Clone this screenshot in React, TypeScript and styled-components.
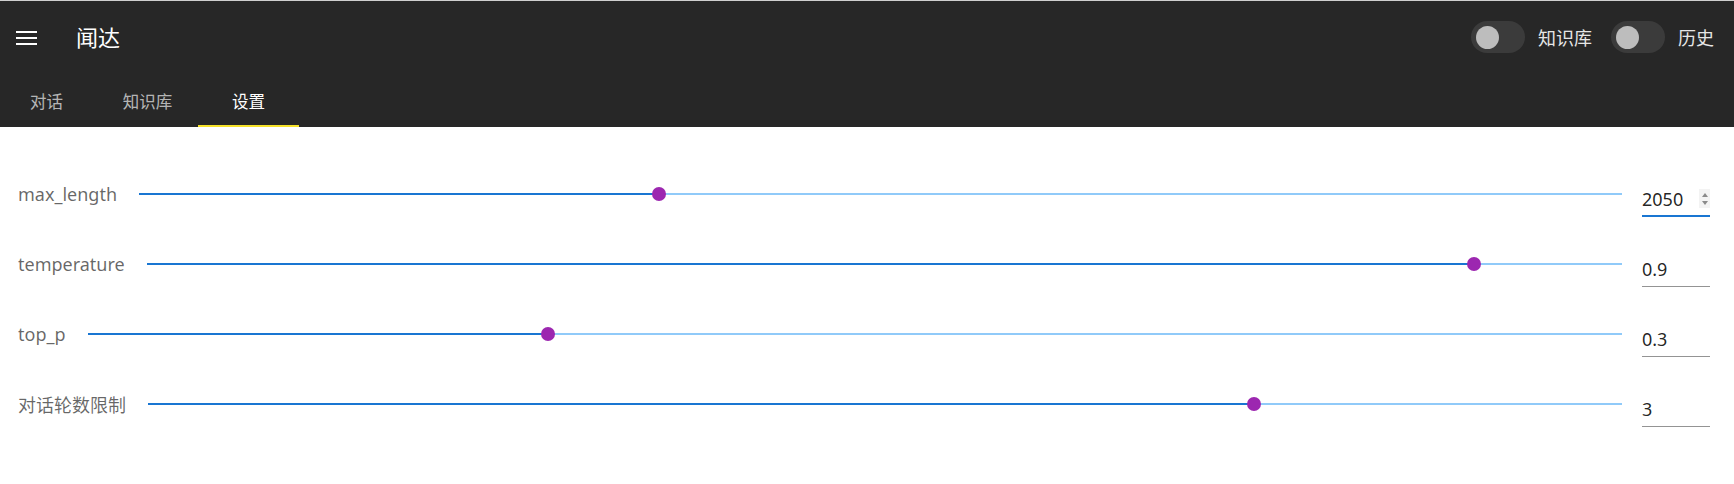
import React from "react";
import styled, { createGlobalStyle } from "styled-components";

const GlobalStyle = createGlobalStyle`
  html, body {
    margin: 0;
    padding: 0;
    background: #ffffff;
    font-family: "Noto Sans", "Noto Sans CJK SC", sans-serif;
  }
  * { box-sizing: border-box; }
`;

const Header = styled.header`
  background: #272727;
  border-top: 1px solid #cfcfcf;
  color: #ffffff;
`;

const Toolbar = styled.div`
  height: 73px;
  display: flex;
  align-items: center;
  padding: 0 20px 1px 16px;
`;

const MenuButton = styled.div`
  width: 21px;
  height: 14px;
  display: flex;
  margin-right: 39px;
  margin-top: 1px;
`;

const Title = styled.div`
  font-size: 22px;
  color: #ffffff;
  flex: 1;
  margin-bottom: 2px;
`;

const ToggleGroup = styled.label<{ $first?: boolean }>`
  display: flex;
  align-items: center;
  margin-left: ${(p) => (p.$first ? "0" : "19px")};
`;

const Track = styled.div`
  width: 54px;
  height: 32px;
  border-radius: 16px;
  background: #3b3b3b;
  display: flex;
  align-items: center;
  padding-left: 5px;
  margin-right: 13px;
`;

const Thumb = styled.div`
  width: 23px;
  height: 23px;
  border-radius: 50%;
  background: #bdbdbd;
`;

const ToggleText = styled.span`
  font-size: 18px;
  color: #e6e6e6;
`;

const TabList = styled.nav`
  display: flex;
  height: 53px;
  margin-left: -4px;
`;

const Tab = styled.div<{ $active?: boolean }>`
  width: 101px;
  display: flex;
  align-items: center;
  justify-content: center;
  padding-top: 2px;
  font-size: 16.5px;
  color: ${(p) => (p.$active ? "#ffffff" : "rgba(255,255,255,0.68)")};
  border-bottom: 2px solid ${(p) => (p.$active ? "#f6e22a" : "transparent")};
`;

const Settings = styled.main`
  padding: 32px 24px 0 18px;
`;

const Row = styled.div`
  height: 70px;
  display: flex;
  align-items: center;
`;

const Label = styled.span`
  font-size: 18px;
  color: rgba(0, 0, 0, 0.6);
  white-space: nowrap;
  margin-right: 22px;
`;

const Slider = styled.div`
  flex: 1;
  height: 14px;
  position: relative;
  display: flex;
  align-items: center;
  margin-right: 20px;
`;

const Rail = styled.div`
  width: 100%;
  height: 2px;
`;

const Knob = styled.span`
  position: absolute;
  top: 50%;
  width: 14px;
  height: 14px;
  border-radius: 50%;
  background: #9c27b0;
  transform: translate(-50%, -50%);
`;

const ValueBox = styled.div<{ $focused?: boolean }>`
  width: 68px;
  height: 36px;
  margin-top: 10px;
  display: flex;
  align-items: center;
  justify-content: space-between;
  font-size: 18px;
  color: rgba(0, 0, 0, 0.87);
  border-bottom: ${(p) => (p.$focused ? "2px solid #1976d2" : "1px solid #949494")};
  padding-top: ${(p) => (p.$focused ? "1px" : "0")};
`;

const Spinner = styled.div`
  width: 11px;
  height: 19px;
  background: #f3f3f3;
  display: flex;
  flex-direction: column;
  align-items: center;
  justify-content: center;
  gap: 4px;
`;

const Arrow = styled.span<{ $down?: boolean }>`
  width: 0;
  height: 0;
  border-left: 3px solid transparent;
  border-right: 3px solid transparent;
  ${(p) =>
    p.$down ? "border-top: 4px solid #8a8a8a;" : "border-bottom: 4px solid #8a8a8a;"}
`;

type Setting = { label: string; value: string; pct: number; focused?: boolean };

const settings: Setting[] = [
  { label: "max_length", value: "2050", pct: 35.03, focused: true },
  { label: "temperature", value: "0.9", pct: 90 },
  { label: "top_p", value: "0.3", pct: 30 },
  { label: "对话轮数限制", value: "3", pct: 75 },
];

export default function App() {
  return (
    <>
      <GlobalStyle />
      <Header>
        <Toolbar>
          <MenuButton>
            <svg width="21" height="14" viewBox="0 0 21 14">
              <rect x="0" y="0" width="21" height="2" fill="#fff" />
              <rect x="0" y="6" width="21" height="2" fill="#fff" />
              <rect x="0" y="12" width="21" height="2" fill="#fff" />
            </svg>
          </MenuButton>
          <Title>闻达</Title>
          <ToggleGroup $first>
            <Track>
              <Thumb />
            </Track>
            <ToggleText>知识库</ToggleText>
          </ToggleGroup>
          <ToggleGroup>
            <Track>
              <Thumb />
            </Track>
            <ToggleText>历史</ToggleText>
          </ToggleGroup>
        </Toolbar>
        <TabList>
          <Tab>对话</Tab>
          <Tab>知识库</Tab>
          <Tab $active>设置</Tab>
        </TabList>
      </Header>
      <Settings>
        {settings.map((s) => (
          <Row key={s.label}>
            <Label>{s.label}</Label>
            <Slider>
              <Rail
                style={{
                  background: `linear-gradient(to right, #1976d2 0%, #1976d2 ${s.pct}%, #90caf9 ${s.pct}%, #90caf9 100%)`,
                }}
              />
              <Knob style={{ left: `${s.pct}%` }} />
            </Slider>
            <ValueBox $focused={s.focused}>
              <span>{s.value}</span>
              {s.focused && (
                <Spinner>
                  <Arrow />
                  <Arrow $down />
                </Spinner>
              )}
            </ValueBox>
          </Row>
        ))}
      </Settings>
    </>
  );
}
